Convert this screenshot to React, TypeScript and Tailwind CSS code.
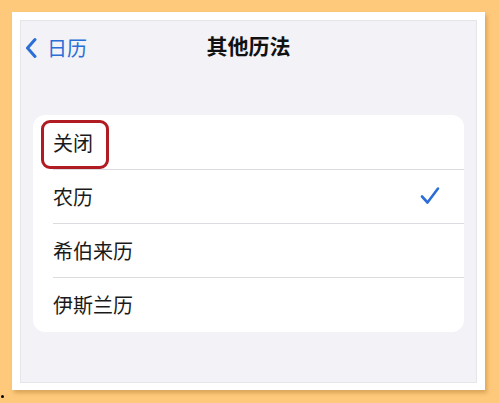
const rows = ["关闭", "农历", "希伯来历", "伊斯兰历"];

function Check() {
  return (
    <svg width="20" height="20" viewBox="0 0 20 20" fill="none">
      <path d="M2 10.5 L7.5 16.5 L18 2.5" stroke="#2b6fd6" strokeWidth="2.6" strokeLinecap="round" strokeLinejoin="round" />
    </svg>
  );
}

function Back() {
  return (
    <svg width="12" height="22" viewBox="0 0 12 22" fill="none">
      <path d="M10 2.5 L2.5 11 L10 19.5" stroke="#2b6fd6" strokeWidth="3" strokeLinecap="round" strokeLinejoin="round" />
    </svg>
  );
}

export default function App() {
  return (
    <div
      className="w-[499px] h-[403px] bg-[#ffc97b] pt-[12px] pl-[12px] relative"
      style={{ fontFamily: '"Noto Sans CJK SC", "Noto Sans", sans-serif' }}
    >
      <div className="w-[473px] h-[378px] bg-white pt-[8px] pl-[8px] shadow-[2px_3px_4px_rgba(150,100,30,0.35)]">
        <div className="w-[457px] h-[363px] bg-[#f2f2f7] border border-[#e6e6ea] flex flex-col">
          <div className="relative h-[52px] flex items-center pt-[2px]">
            <div className="flex items-center gap-[10px] pl-[4px] text-[#2b6fd6] text-[20px] leading-none">
              <Back />
              <span>日历</span>
            </div>
            <div className="absolute left-0 right-0 top-[11px] text-center text-[21px] font-bold text-[#111] leading-[26px]">
              其他历法
            </div>
          </div>
          <div className="mt-[42px] mx-[12px] bg-white rounded-[12px]">
            {rows.map((r, i) => (
              <div key={r} className={`relative ${i === 3 ? "h-[55px]" : "h-[54px]"} flex items-center pl-[20px] pr-[24px]`}>
                {i > 0 && <div className="absolute top-0 left-[20px] right-0 h-px bg-[#dcdce0]" />}
                <span className="text-[20px] text-[#1a1a1a] flex-1 pt-[1px]">{r}</span>
                {i === 1 && <Check />}
                {i === 0 && (
                  <div className="absolute left-[8px] top-[5px] w-[68px] h-[49px] border-[3px] border-[#b01c22] rounded-[9px]" />
                )}
              </div>
            ))}
          </div>
        </div>
      </div>
      <div className="absolute left-[1px] top-[395px] w-[3px] h-[3px] rounded-full bg-black" />
    </div>
  );
}
